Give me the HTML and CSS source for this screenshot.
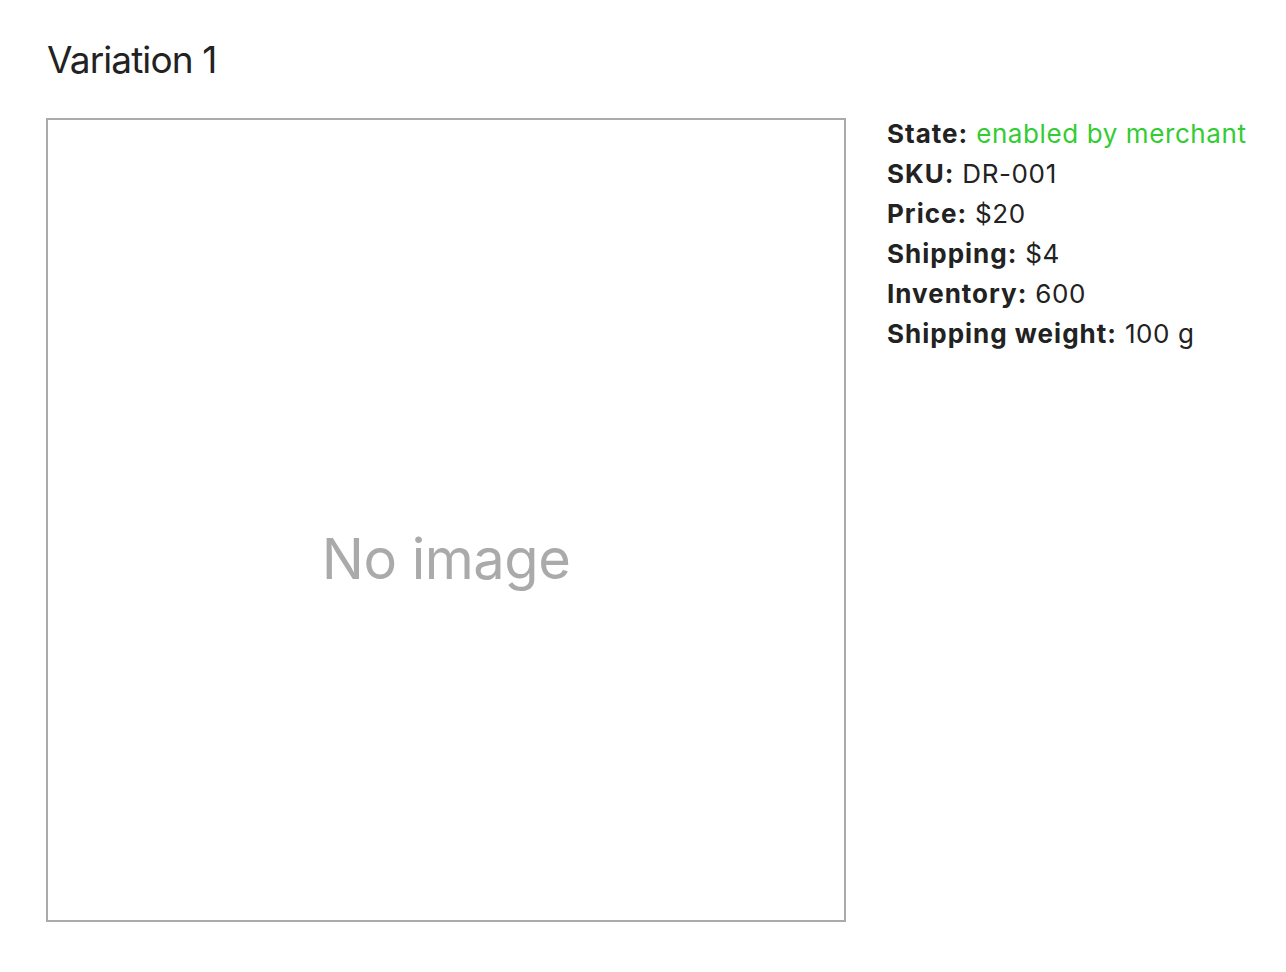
FILE: index.html
```html
<!DOCTYPE html>
<html lang="en">
<head>
    <meta charset="UTF-8">
    <meta name="viewport" content="width=device-width, initial-scale=1.0">
    <title>Variation 1</title>
    <link rel="stylesheet" href="styles.css">
</head>
<body>

    <div class="variation">
        <h1 class="variation-title">Variation 1</h1>
        <div class="variation-body">
            <div class="variation-image"><span>No image</span></div>
            <ul class="variation-details">
                <li><b>State:</b> <span class="state-enabled">enabled by merchant</span></li>
                <li><b>SKU:</b> DR-001</li>
                <li><b>Price:</b> $20</li>
                <li><b>Shipping:</b> $4</li>
                <li><b>Inventory:</b> 600</li>
                <li><b>Shipping weight:</b> 100 g</li>
            </ul>
        </div>
    </div>

</body>
</html>
```

FILE: styles.css
```css
body, html {
    margin: 0;
    padding: 0;
    background: #fff;
    font-family: 'Inter', 'Noto Sans', sans-serif;
    color: #222;
}

.variation {
    padding: 36px 46px;
}

.variation-title {
    font-size: 37px;
    font-weight: 400;
    line-height: 48px;
    margin: 0 0 34px 1px;
    letter-spacing: -0.9px;
}

.variation-body {
    display: flex;
    align-items: flex-start;
    gap: 41px;
}

.variation-image {
    width: 796px;
    height: 800px;
    border: 2px solid #aaa;
    display: flex;
    align-items: center;
    justify-content: center;
    font-size: 56px;
    color: #aaa;
    letter-spacing: -0.5px;
    flex-shrink: 0;
}

.variation-image span {
    margin-top: 77px;
}

.variation-details {
    list-style: none;
    margin: -4px 0 0 0;
    padding: 0;
    font-size: 26px;
    line-height: 40px;
    letter-spacing: 0.6px;
    white-space: nowrap;
}

.variation-details b {
    font-weight: 700;
    letter-spacing: 1px;
}

.state-enabled {
    color: #3c3;
}
```
